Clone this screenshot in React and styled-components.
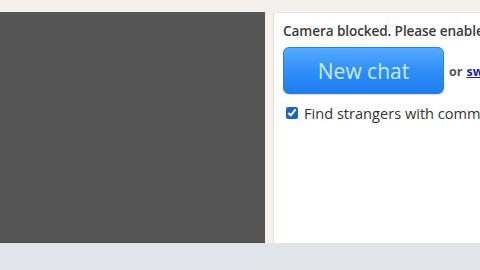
import React from 'react';
import styled, { createGlobalStyle } from 'styled-components';

const GlobalStyle = createGlobalStyle`
  html, body {
    margin: 0;
    padding: 0;
    background: #f3f0eb;
    overflow: hidden;
  }
  body {
    font-family: 'Open Sans', 'Noto Sans', sans-serif;
  }
`;

const Page = styled.div`
  width: 480px;
  height: 270px;
  display: flex;
  flex-direction: column;
  overflow: hidden;
`;

const TopStrip = styled.div`
  height: 12px;
  background: #f4f1ec;
`;

const Main = styled.div`
  display: flex;
  gap: 8px;
  height: 231px;
  background: #f4f1ec;
`;

const VideoPanel = styled.div`
  width: 265px;
  flex-shrink: 0;
  background: #555555;
  border-bottom: 1px solid #4c4e52;
`;

const ChatPanel = styled.div`
  flex: 1;
  min-width: 260px;
  background: #ffffff;
  border: 1px solid #e6e2dc;
  border-right: none;
  border-bottom: none;
  padding: 8px 0 0 9px;
  display: flex;
  flex-direction: column;
  white-space: nowrap;
`;

const Notice = styled.div`
  font-size: 13.6px;
  font-weight: 600;
  color: #3a3a3a;
  line-height: 19px;
  letter-spacing: -0.1px;
`;

const ActionRow = styled.div`
  display: flex;
  align-items: center;
  gap: 5px;
  margin-top: 7px;
`;

const NewChatButton = styled.button`
  flex-shrink: 0;
  width: 161px;
  height: 47px;
  border: 1px solid #2a7fe0;
  border-radius: 6px;
  background: linear-gradient(to bottom, #55abff 0%, #2f8ff8 50%, #1c7ef0 100%);
  color: #cdeaff;
  font-family: 'Open Sans', 'Noto Sans', sans-serif;
  font-size: 21px;
  padding: 0;
  box-shadow: 0 1px 1px rgba(0, 0, 0, 0.15);
`;

const OrText = styled.span`
  flex-shrink: 0;
  font-size: 12.5px;
  font-weight: 700;
  color: #555;
  margin-top: 1px;

  a {
    color: #1c1ca8;
    margin-left: 4px;
  }
`;

const CheckRow = styled.label`
  display: flex;
  align-items: center;
  gap: 6px;
  margin-top: 9px;
  margin-left: 3px;
  font-size: 14.6px;
  color: #333;
`;

const Check = styled.input`
  width: 12px;
  height: 12px;
  margin: 0;
  flex-shrink: 0;
  accent-color: #1f63c6;
`;

const Footer = styled.div`
  flex: 1;
  background: #e1e5ea;
`;

export default function App() {
  return (
    <Page>
      <GlobalStyle />
      <TopStrip />
      <Main>
        <VideoPanel />
        <ChatPanel>
          <Notice>Camera blocked. Please enable camera access</Notice>
          <ActionRow>
            <NewChatButton>New chat</NewChatButton>
            <OrText>
              or<a href="#">switch to text</a>
            </OrText>
          </ActionRow>
          <CheckRow>
            <Check type="checkbox" defaultChecked readOnly />
            Find strangers with common interests
          </CheckRow>
        </ChatPanel>
      </Main>
      <Footer />
    </Page>
  );
}
